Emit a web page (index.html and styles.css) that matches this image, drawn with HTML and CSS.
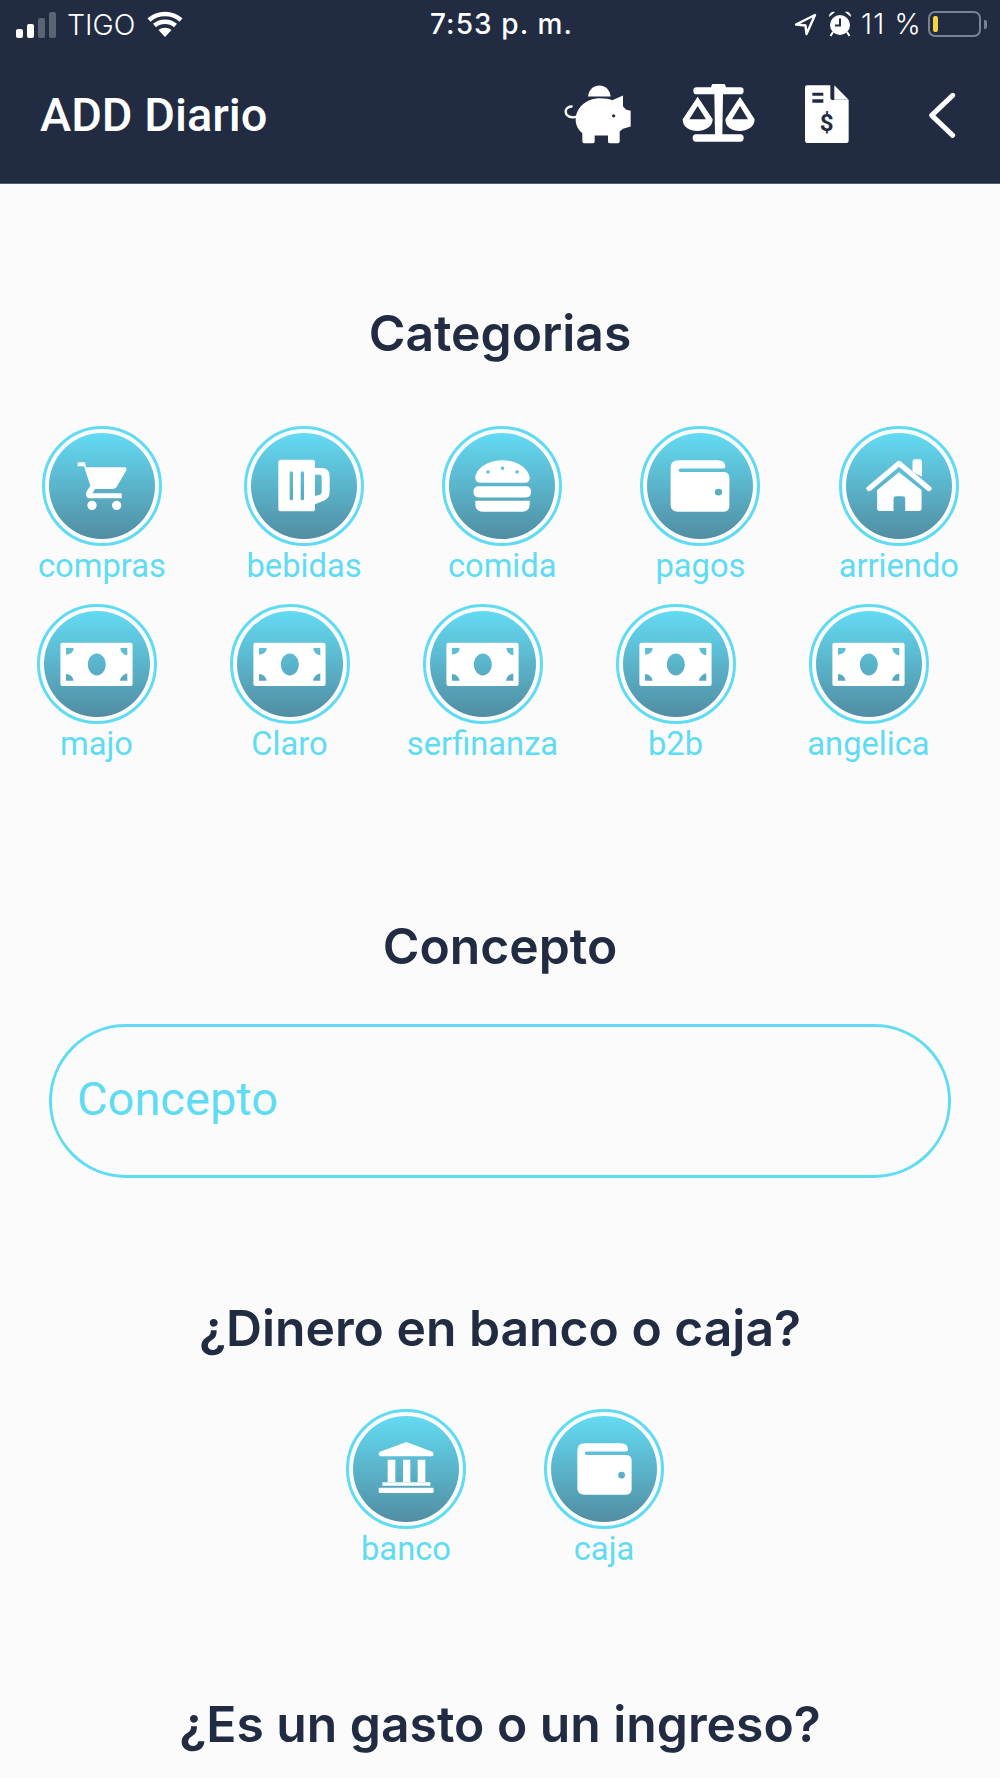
FILE: index.html
```html
<!DOCTYPE html>
<html lang="es">
<head>
  <meta charset="UTF-8">
  <meta name="viewport" content="width=device-width, initial-scale=1.0">
  <title>ADD Diario</title>
  <link rel="stylesheet" href="styles.css">
</head>
<body>

<svg class="defs" width="0" height="0">
  <!-- coordinates are zoomed screen pixels, stretched back to size -->
  <symbol id="icon-wallet" viewBox="680 143 182 175" preserveAspectRatio="none">
    <path fill-rule="evenodd" d="M712 153L820 153Q840 153 841 172Q841 178 835 178L718 178Q712 178 712 183Q712 188 718 188L835 188Q852 188 852 205L852 290Q852 308 835 308L712 308Q690 308 690 288L690 175Q690 153 712 153ZM822 239A10 10 0 1 0 822 259A10 10 0 1 0 822 239Z"/>
  </symbol>
  <symbol id="icon-money" viewBox="110 143 238 160">
    <path fill-rule="evenodd" d="M126 157L332 157Q338 157 338 163L338 282Q338 288 332 288L126 288Q120 288 120 282L120 163Q120 157 126 157ZM230 190C215 190 203 205 203 223C203 241 215 256 230 256C245 256 257 241 257 223C257 205 245 190 230 190ZM137 173L160 173C160 185 150 192 137 193ZM301 173L322 173L322 195C310 193 302 185 301 173ZM137 252C150 252 158 262 160 272L137 272ZM322 250L322 272L300 272C302 260 310 252 322 250Z"/>
  </symbol>
</svg>

<header class="app-header">
  <div class="status-bar">
    <div class="status-left">
      <div class="signal">
        <span class="bar bar-1"></span>
        <span class="bar bar-2"></span>
        <span class="bar bar-3 off"></span>
        <span class="bar bar-4 off"></span>
      </div>
      <span class="carrier">TIGO</span>
      <svg class="wifi" width="36" height="26" viewBox="0 0 36 26">
        <path fill="none" stroke="#fff" stroke-width="4.6" d="M2 9C11 1 25 1 34 9M7.5 14.5C13.500 9.500 22.500 9.500 28.500 14.500"/>
        <path fill="#fff" d="M11.500 19C15 16 21 16 24.500 19L18 26Z"/>
      </svg>
    </div>
    <div class="clock">7:53 p. m.</div>
    <div class="status-right">
      <svg class="arrow" width="23" height="23" viewBox="0 0 23 23">
        <path fill="none" stroke="#fff" stroke-width="2.400" stroke-linejoin="round" d="M21 2L2 11.500L11.500 12.500L12.500 21Z"/>
      </svg>
      <svg class="alarm" width="24" height="26" viewBox="0 0 24 26">
        <circle cx="12" cy="14" r="10" fill="#fff"/>
        <path fill="none" stroke="#212c42" stroke-width="2" d="M12 7.500L12 14.500L7 14.500"/>
        <path fill="#fff" d="M1 6C1 2 4 0 7 1ZM23 6C23 2 20 0 17 1Z"/>
        <path fill="none" stroke="#fff" stroke-width="2" d="M5 21L2.500 25M19 21L21.500 25"/>
      </svg>
      <span class="percent">11 %</span>
      <div class="battery"><span class="battery-level"></span></div>
      <span class="battery-nub"></span>
    </div>
  </div>
  <div class="title-bar">
    <h1 class="title">ADD Diario</h1>
    <svg class="nav-icon piggy" width="70" height="62" viewBox="190 255 210 185">
      <path d="M265 295C268 272 283 262 299 262C315 262 330 272 333 295Z"/>
      <path fill-rule="evenodd" d="M228 365C228 325 265 300 300 300C318 300 330 302 338 306L370 292L370 325L380 335L393 338L393 385L370 392L360 400L360 430Q360 435 355 435L330 435Q325 435 325 430L325 412L285 412L285 430Q285 435 280 435L253 435Q248 435 248 430L248 405C235 395 228 380 228 365ZM342 348A5 5 0 1 0 342 358A5 5 0 1 0 342 348Z"/>
      <path fill="none" stroke="#fff" stroke-width="7" stroke-linecap="round" d="M232 355C212 362 198 352 198 340C198 330 208 325 216 325"/>
    </svg>
    <svg class="nav-icon scale" width="74" height="60" viewBox="543 262 222 180">
      <path d="M587 272L630 272A23 23 0 0 1 675 272L718 272Q728 272 728 282Q728 293 718 293L666 293L664 413L718 413Q728 413 728 424Q728 435 718 435L585 435Q575 435 575 424Q575 413 585 413L642 413L640 293L587 293Q577 293 577 282Q577 272 587 272Z"/>
      <path fill-rule="evenodd" d="M545 368L590 300L635 368C635 392 610 403 590 403C565 403 545 392 545 368ZM590 328L565 368L615 368Z"/>
      <path fill-rule="evenodd" d="M673 368L717 300L761 368C761 392 737 403 717 403C692 403 673 392 673 368ZM717 328L693 368L741 368Z"/>
    </svg>
    <svg class="nav-icon doc" width="46" height="60" viewBox="909 258 138 180">
      <path d="M918 262L988 262L988 300Q988 306 994 306L1043 306L1043 428Q1043 435 1036 435L919 435Q912 435 912 428L912 268Q912 262 918 262Z"/>
      <path d="M1000 262L1043 305L1000 305Z"/>
      <path fill="#212c42" d="M934 284L967 284L967 293L934 293ZM934 304L967 304L967 314L934 314Z"/>
      <text class="doc-dollar" x="977" y="399" text-anchor="middle">$</text>
    </svg>
    <svg class="nav-icon chevron" width="32" height="48" viewBox="1275 272 96 144">
      <path fill="none" stroke="#fff" stroke-width="15" stroke-linecap="round" stroke-linejoin="round" d="M1355 288L1292 348L1355 408"/>
    </svg>
  </div>
</header>

<main class="content">
  <h2 class="heading heading-categorias">Categorias</h2>

  <div class="cat-row">
    <div class="cat">
      <div class="ring"><div class="disc">
        <svg width="54" height="54" viewBox="160 150 162 162">
          <path d="M168 160L190 160L193 175L308 175Q318 175 313 186L284 235Q280 240 272 240L220 240L212 253L300 253L300 268L205 268C193 268 190 255 196 245L206 230L187 172L168 172ZM211 275A14 14 0 1 0 211 303A14 14 0 1 0 211 275ZM285 275A14 14 0 1 0 285 303A14 14 0 1 0 285 275Z"/>
        </svg>
      </div></div>
      <span class="cat-label">compras</span>
    </div>
    <div class="cat">
      <div class="ring"><div class="disc">
        <svg width="58" height="56" viewBox="766 148 174 168">
          <path fill-rule="evenodd" d="M784 153L878 153Q886 153 886 161L886 178L905 178Q930 178 930 203L930 250Q930 270 912 276L886 287L886 300Q886 308 878 308L784 308Q776 308 776 300L776 161Q776 153 784 153ZM886 198L886 262L900 258Q906 256 906 250L906 205Q906 198 900 198ZM815 188Q810 188 810 193L810 270Q810 275 815 275Q820 275 820 270L820 193Q820 188 815 188ZM848 188Q843 188 843 193L843 270Q843 275 848 275Q853 275 853 270L853 193Q853 188 848 188Z"/>
        </svg>
      </div></div>
      <span class="cat-label">bebidas</span>
    </div>
    <div class="cat">
      <div class="ring"><div class="disc">
        <svg width="61" height="54" viewBox="143 149 168 163" preserveAspectRatio="none">
          <path fill-rule="evenodd" d="M152 205C155 175 190 153 227 153C265 153 298 175 302 205Q302 221 288 221L168 221Q152 221 152 205ZM187 183A5 5 0 1 0 187 193A5 5 0 1 0 187 183ZM227 172A5 5 0 1 0 227 182A5 5 0 1 0 227 172ZM267 183A5 5 0 1 0 267 193A5 5 0 1 0 267 183Z"/>
          <path d="M162 231L291 231Q306 231 306 248Q306 265 291 265L162 265Q147 265 147 248Q147 231 162 231Z"/>
          <path d="M152 275L302 275L302 285Q302 308 280 308L174 308Q152 308 152 285Z"/>
        </svg>
      </div></div>
      <span class="cat-label">comida</span>
    </div>
    <div class="cat">
      <div class="ring"><div class="disc">
        <svg width="66" height="58"><use href="#icon-wallet"/></svg>
      </div></div>
      <span class="cat-label">pagos</span>
    </div>
    <div class="cat">
      <div class="ring"><div class="disc">
        <svg width="70" height="56" viewBox="1224 149 192 168" preserveAspectRatio="none">
          <path d="M1357 160Q1357 153 1364 153L1376 153Q1383 153 1383 160L1383 205L1357 190Z"/>
          <path fill="none" stroke="#fff" stroke-width="15" stroke-linecap="round" stroke-linejoin="round" d="M1238 241L1320 165L1402 241"/>
          <path d="M1320 192L1382 245L1382 300Q1382 308 1375 308L1337 308L1337 270Q1337 264 1330 264L1312 264Q1305 264 1305 270L1305 308L1267 308Q1260 308 1260 300L1260 245Z"/>
        </svg>
      </div></div>
      <span class="cat-label">arriendo</span>
    </div>
  </div>

  <div class="cat-grid">
    <div class="cat">
      <div class="ring"><div class="disc"><svg width="79" height="53"><use href="#icon-money"/></svg></div></div>
      <span class="cat-label">majo</span>
    </div>
    <div class="cat">
      <div class="ring"><div class="disc"><svg width="79" height="53"><use href="#icon-money"/></svg></div></div>
      <span class="cat-label">Claro</span>
    </div>
    <div class="cat">
      <div class="ring"><div class="disc"><svg width="79" height="53"><use href="#icon-money"/></svg></div></div>
      <span class="cat-label">serfinanza</span>
    </div>
    <div class="cat">
      <div class="ring"><div class="disc"><svg width="79" height="53"><use href="#icon-money"/></svg></div></div>
      <span class="cat-label">b2b</span>
    </div>
    <div class="cat">
      <div class="ring"><div class="disc"><svg width="79" height="53"><use href="#icon-money"/></svg></div></div>
      <span class="cat-label">angelica</span>
    </div>
  </div>

  <h2 class="heading heading-concepto">Concepto</h2>
  <div class="field"><span class="placeholder">Concepto</span></div>

  <h2 class="heading heading-dinero">¿Dinero en banco o caja?</h2>
  <div class="money-row">
    <div class="cat">
      <div class="ring"><div class="disc">
        <svg width="62" height="58" viewBox="134 159 186 174">
          <path d="M228 165L308 195L310 205L305 208L150 208L145 203L147 195Z"/>
          <path d="M172 218L195 218L195 285L172 285ZM218 218L240 218L240 285L218 285ZM262 218L285 218L285 285L262 285Z"/>
          <path d="M156 286L300 286L300 296L156 296ZM149 302L306 302Q310 302 310 306L310 314Q310 318 306 318L149 318Q145 318 145 314L145 306Q145 302 149 302Z"/>
        </svg>
      </div></div>
      <span class="cat-label">banco</span>
    </div>
    <div class="cat">
      <div class="ring"><div class="disc">
        <svg width="61" height="58"><use href="#icon-wallet"/></svg>
      </div></div>
      <span class="cat-label">caja</span>
    </div>
  </div>

  <h2 class="heading heading-tipo">¿Es un gasto o un ingreso?</h2>
</main>

</body>
</html>
```

FILE: styles.css
```css
body {
  margin: 0;
  height: 1778px;
  overflow: hidden;
  background-color: #fbfbfb;
  font-family: 'Roboto', sans-serif;
  color: #212c42;
}
.defs {
  position: absolute;
}
svg {
  display: block;
  fill: #fff;
  flex: none;
}
.app-header {
  height: 183px;
  background-color: #212c42;
  border-bottom: 1px solid #555e72;
  color: #fff;
}
.status-bar {
  height: 48px;
  display: flex;
  align-items: center;
  padding: 0 13px 0 16px;
}
.status-left,
.status-right {
  flex: 1;
  display: flex;
  align-items: center;
}
.status-right {
  justify-content: flex-end;
}
.signal {
  display: flex;
  align-items: flex-end;
  gap: 4px;
  height: 26px;
  margin-right: 11px;
  margin-top: 1px;
}
.bar {
  width: 7px;
  border-radius: 2px;
  background-color: #fff;
}
.bar.off {
  background-color: #5b6475;
}
.bar-1 { height: 9px; }
.bar-2 { height: 14px; }
.bar-3 { height: 20px; }
.bar-4 { height: 26px; }
.carrier {
  font-family: 'Inter', sans-serif;
  font-weight: 300;
  font-size: 28.5px;
  margin-right: 12px;
}
.wifi {
  margin-top: -1px;
}
.clock {
  font-family: 'Inter', sans-serif;
  font-weight: 500;
  font-size: 28px;
  letter-spacing: 1.1px;
}
.arrow {
  margin-right: 11px;
}
.alarm {
  margin-right: 9px;
}
.percent {
  font-family: 'Inter', sans-serif;
  font-weight: 300;
  font-size: 28px;
  letter-spacing: 1.2px;
  margin-right: 6px;
}
.battery {
  width: 53px;
  height: 26px;
  box-sizing: border-box;
  border: 2px solid #7a8291;
  border-radius: 7px;
  padding: 3px;
}
.battery-level {
  display: block;
  width: 5px;
  height: 100%;
  border-radius: 2px;
  background-color: #f5d33f;
}
.battery-nub {
  width: 3px;
  height: 9px;
  margin-left: 3px;
  border-radius: 0 2px 2px 0;
  background-color: #7a8291;
}
.title-bar {
  display: flex;
  align-items: center;
  padding: 35px 0 0 40px;
}
.title {
  margin: 2px auto 0 0;
  font-size: 47px;
  font-weight: 500;
  line-height: 60px;
}
.piggy { margin-right: 49px; }
.scale { margin-right: 48px; }
.doc { margin-right: 76px; }
.chevron { margin-right: 42px; }

.content {
  display: flex;
  flex-direction: column;
}
.heading {
  margin: 0;
  font-family: 'Inter', sans-serif;
  font-weight: 600;
  font-size: 49.8px;
  line-height: 60px;
  text-align: center;
}
.heading-categorias { margin-top: 119px; }
.heading-concepto { margin-top: 151px; }
.heading-dinero { margin-top: 120px; }
.heading-tipo { margin-top: 124px; }

.cat {
  display: flex;
  flex-direction: column;
  align-items: center;
}
.ring {
  width: 120px;
  height: 120px;
  box-sizing: border-box;
  border: 3px solid #5fdcf3;
  border-radius: 50%;
  padding: 4px;
}
.disc {
  height: 100%;
  border-radius: 50%;
  display: flex;
  align-items: center;
  justify-content: center;
  background: linear-gradient(#63dbf3, #518da2);
}
.cat-label {
  font-size: 32.7px;
  line-height: 41px;
  color: #5fdcf3;
  white-space: nowrap;
}
.cat-row {
  display: flex;
  justify-content: space-between;
  padding: 0 41px 0 38px;
  margin-top: 63px;
}
.cat-grid {
  display: grid;
  grid-template-columns: repeat(5, 193px);
  justify-items: center;
  margin-top: 17px;
}
.field {
  height: 154px;
  box-sizing: border-box;
  margin: 48px 49px 0 49px;
  padding: 0 0 6px 25px;
  border: 3px solid #5fdcf3;
  border-radius: 77px;
  display: flex;
  align-items: center;
}
.placeholder {
  font-size: 47px;
  color: #5fdcf3;
}
.money-row {
  display: flex;
  justify-content: center;
  gap: 78px;
  margin-top: 51px;
  padding-left: 10px;
}
.doc-dollar {
  font-family: 'Roboto', sans-serif;
  font-weight: 700;
  font-size: 72px;
  fill: #212c42;
}
```
